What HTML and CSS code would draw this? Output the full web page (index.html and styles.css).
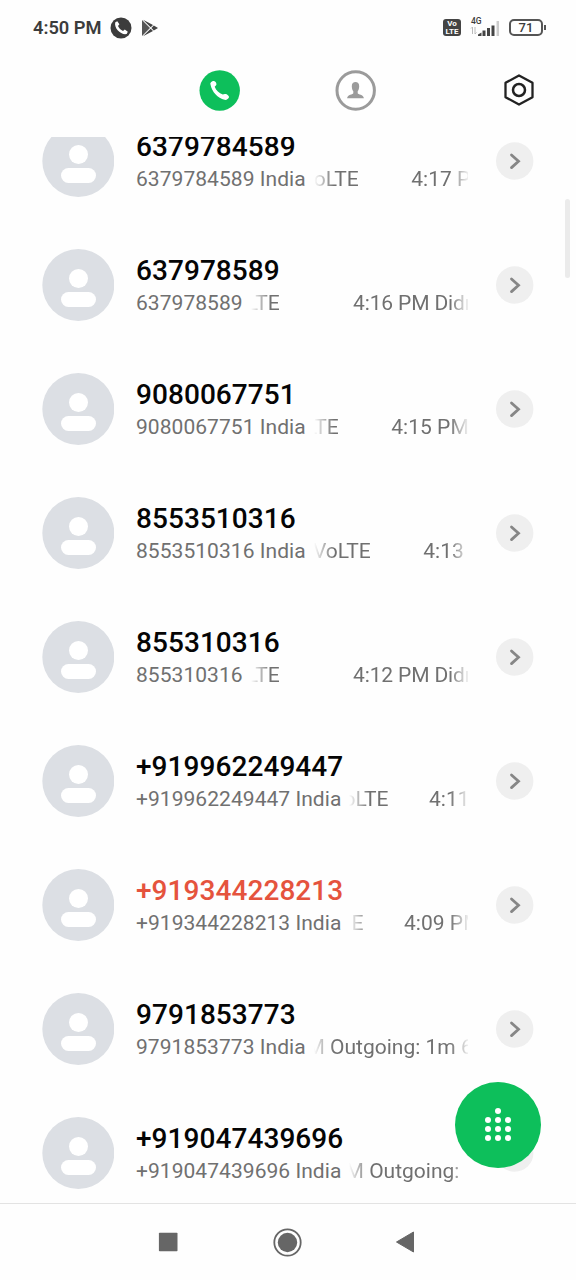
FILE: index.html
```html
<!DOCTYPE html>
<html lang="en">
<head>
<meta charset="utf-8">
<title>Call log</title>
<link rel="stylesheet" href="styles.css">
</head>
<body>
<svg class="defs" width="0" height="0" aria-hidden="true">
  <symbol id="avatar" viewBox="0 0 72 72"><circle cx="36.300" cy="36" r="36" fill="#dcdfe4"/><circle cx="36.500" cy="29.500" r="9.500" fill="#fff"/><rect x="19" y="43" width="35" height="15" rx="7.500" fill="#fff"/></symbol>
  <symbol id="go" viewBox="0 0 38 38"><circle cx="18.700" cy="19" r="18.700" fill="#efefef"/><path d="M15.500 13L22.500 19.300L15.500 25.600" fill="none" stroke="#868686" stroke-width="2.800" stroke-linecap="round" stroke-linejoin="miter"/></symbol>
</svg>
<div class="phone">
  <header class="status">
    <span class="clock">4:50 PM</span>
    <svg class="call-note" width="22" height="22" viewBox="0 0 22 22"><circle cx="11" cy="11" r="10.500" fill="#3c3c3c"/><path d="M5.300 5.200L7.300 4.200L9.400 7.200L8 9C9 11.200 10.700 12.900 13 14L14.800 12.600L17.800 14.700L16.700 17C11 18.300 3.600 11 5.300 5.200Z" fill="#fff"/></svg>
    <svg class="play-note" width="18" height="18" viewBox="0 0 18 18"><path d="M1 1L9 9L1 17Z" fill="#555"/><path d="M2 .8L12 6L9.700 8.300ZM2 17.200L12 12L9.700 9.700ZM12.800 6.400L17 9L12.800 11.600L10.400 9Z" fill="#444"/></svg>
    <span class="volte"><span>Vo</span><span>LTE</span></span>
    <span class="signal">
      <span class="net">4G</span>
      <svg width="31" height="17" viewBox="0 0 31 17"><path d="M2.500 13V6M1 7.500L2.500 6M5 6V13M5 13L6.500 11.500" stroke="#bbb" fill="none"/><path d="M8 15V13.500L11.500 11.500V15Z" fill="#444"/><path d="M14 15V9.500M18.500 15V7M23 15V4.500" stroke="#444" stroke-width="3"/><path d="M27.800 15V0" stroke="#ccc" stroke-width="2.500"/></svg>
    </span>
    <span class="battery">71</span>
  </header>
  <nav class="tabs">
    <svg class="tab-calls" width="41" height="41" viewBox="0 0 41 41"><circle cx="20.700" cy="20.500" r="20.200" fill="#0dbf5b"/><path d="M11.500 14.500C10.700 12.700 13 11.100 14.600 11C16.200 11 18 13.300 17.300 15L15.700 16.700C17.200 20.600 20 23.100 23.800 24.600L25.800 24C27.700 23.600 30.300 25.800 30 27.300C29.500 29 27.300 30.300 25.500 29.800C18.900 28.300 12.800 21.800 11.500 14.500Z" fill="#fff"/></svg>
    <svg class="tab-contacts" width="41" height="41" viewBox="0 0 41 41"><circle cx="20.700" cy="20.500" r="18.700" fill="#fff" stroke="#9b9b9b" stroke-width="3"/><path d="M16.800 16.500C16.300 10.600 24.700 10.600 24.200 16.500C24 19 23.500 20.200 22.700 21.300V23.300C23 24.600 28.500 24.500 28.900 28.300H12.100C12.500 24.500 18 24.600 18.300 23.300V21.300C17.500 20.200 17 19 16.800 16.500Z" fill="#9b9b9b"/></svg>
    <svg class="settings" width="30" height="32" viewBox="0 0 30 32"><path d="M15 1.500L28.500 8.800V23.200L15 30.500L1.500 23.200V8.800Z" fill="none" stroke="#222" stroke-width="2.300" stroke-linejoin="round"/><circle cx="15" cy="16" r="6" fill="none" stroke="#222" stroke-width="2.500"/></svg>
  </nav>
  <main class="calls">
    <ul class="list">
      <li class="row"><svg class="avatar"><use href="#avatar"/></svg><div class="info"><b class="name">6379784589</b><div class="sub"><span class="num">6379784589 India</span><span class="ticker"><span class="tail" style="width:45px">oLTE</span><span>4:17 P</span></span></div></div><svg class="go"><use href="#go"/></svg></li>
      <li class="row"><svg class="avatar"><use href="#avatar"/></svg><div class="info"><b class="name">637978589</b><div class="sub"><span class="num">637978589</span><span class="ticker"><span class="tail" style="width:29px">LTE</span><span class="lead">4:16 PM Didn</span></span></div></div><svg class="go"><use href="#go"/></svg></li>
      <li class="row"><svg class="avatar"><use href="#avatar"/></svg><div class="info"><b class="name">9080067751</b><div class="sub"><span class="num">9080067751 India</span><span class="ticker"><span class="tail" style="width:25px">LTE</span><span>4:15 PM</span></span></div></div><svg class="go"><use href="#go"/></svg></li>
      <li class="row"><svg class="avatar"><use href="#avatar"/></svg><div class="info"><b class="name">8553510316</b><div class="sub"><span class="num">8553510316 India</span><span class="ticker"><span class="tail" style="width:57px">VoLTE</span><span>4:13</span></span></div></div><svg class="go"><use href="#go"/></svg></li>
      <li class="row"><svg class="avatar"><use href="#avatar"/></svg><div class="info"><b class="name">855310316</b><div class="sub"><span class="num">855310316</span><span class="ticker"><span class="tail" style="width:29px">LTE</span><span class="lead">4:12 PM Didn</span></span></div></div><svg class="go"><use href="#go"/></svg></li>
      <li class="row"><svg class="avatar"><use href="#avatar"/></svg><div class="info"><b class="name">+919962249447</b><div class="sub"><span class="num">+919962249447 India</span><span class="ticker"><span class="tail" style="width:39px">oLTE</span><span>4:11</span></span></div></div><svg class="go"><use href="#go"/></svg></li>
      <li class="row"><svg class="avatar"><use href="#avatar"/></svg><div class="info"><b class="name missed">+919344228213</b><div class="sub"><span class="num">+919344228213 India</span><span class="ticker"><span class="tail" style="width:14px">E</span><span>4:09 PM</span></span></div></div><svg class="go"><use href="#go"/></svg></li>
      <li class="row"><svg class="avatar"><use href="#avatar"/></svg><div class="info"><b class="name">9791853773</b><div class="sub"><span class="num">9791853773 India</span><span class="ticker"><span class="tail" style="width:159px">M Outgoing: 1m 6</span></span></div></div><svg class="go"><use href="#go"/></svg></li>
      <li class="row"><svg class="avatar"><use href="#avatar"/></svg><div class="info"><b class="name">+919047439696</b><div class="sub"><span class="num">+919047439696 India</span><span class="ticker"><span class="tail" style="width:110px">M Outgoing:</span></span></div></div><svg class="go"><use href="#go"/></svg></li>
    </ul>
  </main>
  <footer class="navbar">
    <svg width="20" height="20" viewBox="0 0 20 20"><rect x=".9" y=".7" width="18.600" height="18.600" rx=".8" fill="#666"/></svg>
    <svg width="29" height="29" viewBox="0 0 29 29"><circle cx="14.500" cy="14.500" r="13.200" fill="none" stroke="#666" stroke-width="1.800"/><circle cx="14.500" cy="14.500" r="9.700" fill="#666"/></svg>
    <svg width="20" height="22" viewBox="0 0 20 22"><path d="M.5 11L17.500 1V21Z" fill="#666" stroke="#666" stroke-linejoin="round"/></svg>
  </footer>
  <div class="scrollbar"></div>
  <button class="dial" aria-label="Dial pad"><i></i><i></i><i></i><i></i><i></i><i></i><i></i><i></i><i></i><i></i></button>
</div>
</body>
</html>
```
FILE: styles.css
```css
* { box-sizing: border-box; }
body { margin: 0; background: #fefefe; font-family: Roboto, "Noto Sans", sans-serif; }
svg { display: block; flex: none; }
.defs { position: absolute; }
.phone { position: relative; display: flex; flex-direction: column; width: 576px; height: 1280px; overflow: hidden; background: #fefefe; }

.status { display: flex; align-items: center; height: 55px; padding: 0 33px 0 33px; color: #3c3c3c; flex: none; }
.clock { width: 77px; font-size: 18.3px; font-weight: 600; white-space: nowrap; }
.call-note { margin-right: 9px; }
.volte { display: flex; flex-direction: column; align-items: center; justify-content: center; width: 18px; height: 17px; margin-left: auto; margin-right: 9px; border-radius: 3px; background: #444; color: #fff; font-size: 8px; font-weight: 700; line-height: 7.5px; }
.signal { display: flex; flex-direction: column; width: 31px; height: 23px; margin: 0 8px 0 0; }
.net { height: 5px; padding-left: 1px; font-size: 8.5px; font-weight: 500; line-height: 10px; }
.battery { position: relative; width: 34px; height: 17px; border: 2px solid #555; border-radius: 5px; font-size: 13px; line-height: 14px; text-align: center; font-weight: 500; }
.battery::after { content: ""; position: absolute; right: -5px; top: 4px; width: 2px; height: 5px; background: #555; }

.tabs { display: flex; align-items: center; height: 82px; padding: 0 42px 12px 199px; flex: none; }
.tab-contacts { margin-left: 95px; }
.settings { margin-left: auto; }

.calls { flex: 1; min-height: 0; overflow: hidden; }
.list { margin: -38px 0 0; padding: 0; list-style: none; }
.row { display: flex; align-items: center; height: 124px; padding: 0 42px; }
.avatar { width: 72px; height: 72px; margin-right: 22px; }
.info { width: 332px; margin-right: 28px; padding-top: 2px; }
.name { display: block; color: #050505; font-size: 28px; font-weight: 500; line-height: 34px; letter-spacing: .06px; }
.missed { color: #e5533d; }
.sub { display: flex; color: #707070; font-size: 21px; line-height: 30px; letter-spacing: .05px; white-space: nowrap; }
.num { margin-right: 8px; }
.ticker { display: flex; flex: 1; min-width: 0; overflow: hidden; gap: calc(33.33% + 1px); -webkit-mask-image: linear-gradient(90deg, transparent, #000 20px, #000 calc(100% - 18px), transparent calc(100% + 2px)); mask-image: linear-gradient(90deg, transparent, #000 20px, #000 calc(100% - 18px), transparent calc(100% + 2px)); }
.tail { display: flex; flex: none; justify-content: flex-end; letter-spacing: 0; }
.lead { letter-spacing: -.15px; }
.go { width: 38px; height: 38px; }

.navbar { display: flex; align-items: center; height: 77px; padding: 0 160px 0 158px; border-top: 1px solid #e3e3e3; justify-content: space-between; flex: none; }
.scrollbar { position: absolute; right: 6px; top: 199px; width: 5px; height: 79px; border-radius: 3px; background: #ebebeb; }
.dial { position: absolute; left: 455px; top: 1082px; display: grid; grid-template-columns: repeat(3, 6px); grid-auto-rows: 6px; gap: 3px 3.7px; place-content: center; width: 86px; height: 86px; padding: 0 0 2px; border: 0; border-radius: 50%; background: #0dbf5b; }
.dial i { border-radius: 50%; background: #fff; }
.dial i:first-child { grid-column: 2; }
.dial i:nth-child(2) { grid-column: 1; }
```
